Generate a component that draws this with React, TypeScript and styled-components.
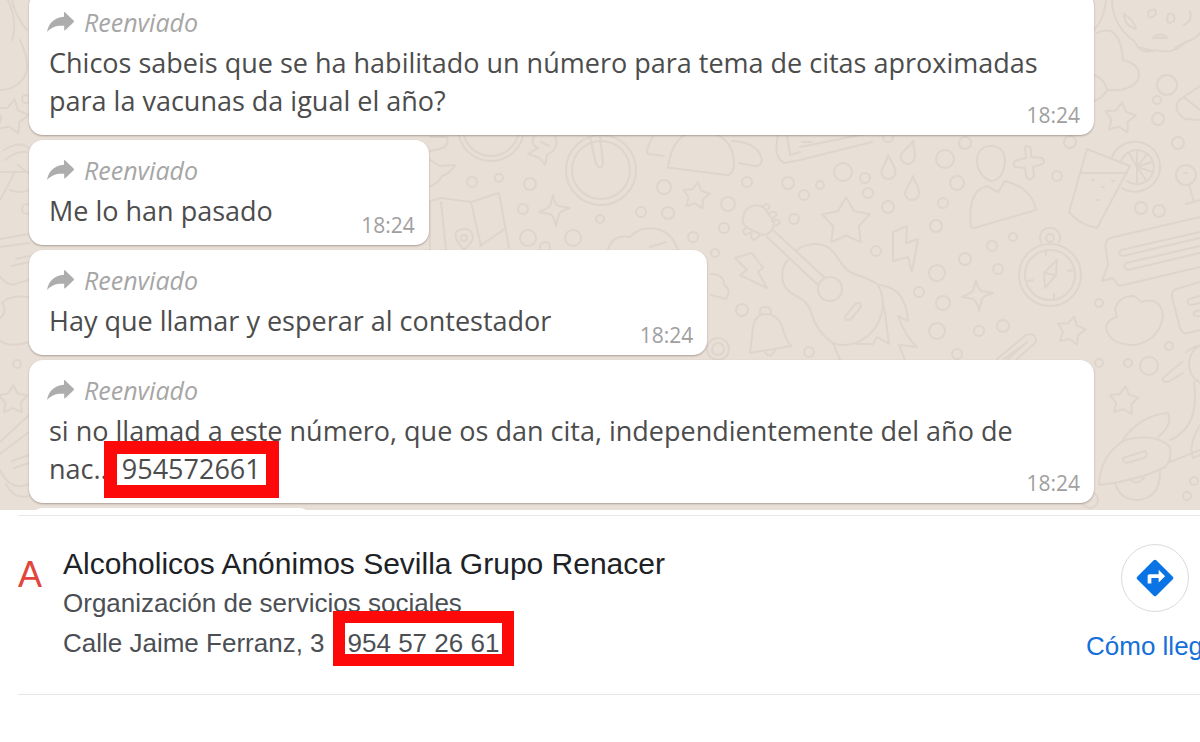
import React from "react";
import styled, { createGlobalStyle } from "styled-components";

const GlobalStyle = createGlobalStyle`
  *, *::before, *::after { box-sizing: border-box; }
  body { margin: 0; background: #fff; }
`;

const Page = styled.main`
  width: 100%;
  overflow: hidden;
`;

const Chat = styled.section`
  position: relative;
  overflow: hidden;
  background: #e8dfd7;
  font-family: "Open Sans", "Noto Sans", sans-serif;
`;

const WallpaperSvg = styled.svg`
  position: absolute;
  inset: 0;
  width: 100%;
  height: 100%;
  fill: none;
  stroke: #dfd5cc;
  stroke-width: 2;
  stroke-linejoin: round;
  stroke-linecap: round;
`;

const MessageList = styled.ul`
  position: relative;
  display: flex;
  flex-direction: column;
  align-items: flex-start;
  gap: 5px;
  margin: -8px 106px 0 29px;
  padding: 0;
  list-style: none;
`;

const Bubble = styled.li`
  max-width: 100%;
  padding: 14px 14px 15px 20px;
  border-radius: 14px;
  background: #fff;
  box-shadow: 0 1px 2px rgba(80, 60, 50, 0.4);
`;

const NextBubble = styled.li`
  width: 284px;
  height: 2px;
  overflow: hidden;

  &::before {
    content: "";
    display: block;
    height: 40px;
    border-radius: 14px;
    background: #fff;
  }
`;

const Forwarded = styled.div`
  display: flex;
  align-items: center;
  gap: 10px;
  height: 32px;
  margin: 0 0 6px -2px;
  color: #a6a6a6;
  font-size: 25px;
  font-style: italic;
  line-height: 32px;
`;

const ForwardIcon = styled.svg`
  width: 27px;
  height: 20px;
  fill: #adadad;
`;

const MessageBody = styled.div`
  display: grid;

  & > * {
    grid-area: 1 / 1;
  }
`;

const MessageText = styled.p`
  margin: 0;
  color: #4c4c4c;
  font-size: 27px;
  line-height: 38px;
`;

const TimeSpace = styled.span`
  display: inline-block;
  width: 142px;
`;

const Time = styled.time`
  place-self: end;
  margin-bottom: -10px;
  color: #a0a0a0;
  font-size: 21px;
  line-height: 30px;
`;

const Highlight = styled.mark<{ $inset: string; $gap?: number; $thick: number }>`
  position: relative;
  display: inline-block;
  margin-left: ${(p) => p.$gap ?? 0}px;
  background: none;
  color: inherit;

  &::after {
    content: "";
    position: absolute;
    inset: ${(p) => p.$inset};
    border: ${(p) => p.$thick}px solid #fd0909;
  }
`;

const Results = styled.section`
  padding: 5px 0 47px 18px;
  font-family: "Liberation Sans", Arial, sans-serif;
`;

const Listing = styled.article`
  display: flex;
  align-items: flex-start;
  padding: 29px 0 28px;
  border-top: 1px solid #e6e7e9;
  border-bottom: 1px solid #e6e7e9;
`;

const Marker = styled.span`
  flex: none;
  width: 45px;
  margin-top: 10px;
  color: #e2453c;
  font-size: 36px;
  line-height: 40px;
`;

const Details = styled.div`
  flex: 1;
  min-width: 0;
`;

const Name = styled.h2`
  margin: 0;
  color: #1d2226;
  font-size: 30px;
  font-weight: 400;
  line-height: 38px;
`;

const Line = styled.p`
  margin: 0;
  color: #4b4f54;
  font-size: 26px;
  line-height: 40px;
`;

const Directions = styled.a`
  display: flex;
  flex: none;
  flex-direction: column;
  align-items: center;
  gap: 14px;
  width: 138px;
  margin: -1px -24px 0 0;
  color: #1470d8;
  font-size: 26px;
  line-height: 40px;
  text-decoration: none;
`;

const RoundIcon = styled.span`
  display: grid;
  place-items: center;
  width: 68px;
  height: 68px;
  border: 1px solid #d9dbde;
  border-radius: 50%;

  svg {
    width: 44px;
    height: 44px;
    fill: #0b74e5;
  }
`;

const DirectionsLabel = styled.span`
  align-self: flex-start;
  white-space: nowrap;
`;

const circles: [number, number, number][] = [
  [472, 182, 5], [499, 178, 4], [530, 184, 6], [523, 209, 5], [528, 238, 8], [573, 238, 8],
  [600, 219, 4], [641, 212, 5], [668, 213, 6], [664, 187, 7], [728, 204, 7], [747, 182, 5],
  [788, 183, 6], [724, 228, 5], [693, 237, 5], [794, 219, 5], [715, 253, 4], [742, 310, 6],
  [809, 352, 5], [545, 247, 5], [718, 349, 11], [718, 349, 6],
  [843, 172, 9], [865, 178, 5], [820, 185, 4], [868, 193, 5], [804, 195, 5], [888, 207, 6],
  [945, 159, 9], [957, 183, 7], [943, 203, 5], [936, 226, 6], [1057, 176, 5], [965, 143, 6],
  [1070, 142, 6], [1178, 143, 6], [1013, 237, 4], [992, 246, 5], [965, 259, 6], [998, 269, 5],
  [937, 273, 8], [876, 251, 5], [919, 292, 5], [943, 303, 7], [937, 331, 8], [979, 331, 5],
  [1003, 326, 6], [957, 354, 5], [1099, 303, 4], [1169, 346, 4], [1141, 208, 6], [1159, 211, 6],
  [1149, 366, 9], [1128, 363, 4], [1099, 363, 4], [1194, 481, 4], [1187, 496, 4], [1090, 500, 8],
  [1167, 85, 10], [1157, 100, 4], [1158, 119, 6], [888, 137, 5],
  [26, 99, 4], [27, 209, 5], [17, 364, 4],
];

const stars: [number, number, number, number][] = [
  [846, 222, 25, 0], [696, 196, 14, 8], [1071, 331, 15, 12], [1124, 401, 15, 5],
  [1120, 118, 16, 8], [11, 117, 18, 12], [13, 400, 15, 0],
];

const sparkles: [number, number][] = [[554, 210], [977, 295]];

const drops: [number, number, number][] = [[888, 167, -4], [909, 152, 16], [912, 188, 0]];

const outlines = [
  // drum and pocket watch beside the second message
  "M458 128a33 33 0 0 0 66 0M463 128a28 28 0 0 0 56 0",
  "M590 137 596 164Q601 172 603 163L600 137",
  "M534 136Q530 145 538 148L528 154 540 158 545 165 547 155Q560 148 555 136M541 142l8 4",
  "M430 137 447 137Q450 146 440 149L430 151M430 160 440 166 455 165Q452 172 442 176 438 184 430 186",
  // umbrella
  "M668 168Q672 132 700 130 735 134 734 166 732 176 726 175L672 168ZM653 137Q645 150 648 154L664 156M732 141Q758 142 762 160 761 167 754 166L739 163",
  // folded map
  "M430 201 441 198 471 202 499 193 509 248M430 201V250M441 202 446 250M471 202 481 246M480 246 506 228",
  "M464 250Q450 234 459 230 472 226 473 238 472 243 464 250Z",
  // cloud above the third message
  "M608 250Q612 234 630 237 640 226 658 229 673 234 678 250M650 247l16-5",
  "M711 274Q724 274 724 285 732 290 726 299L711 295",
  // guitar
  "M788 260C780 268 780 285 790 292C800 300 806 298 811 312C815 326 822 336 833 343C846 348 865 344 877 325C884 312 885 298 878 285C870 278 858 276 850 272C840 265 838 255 829 248C818 241 805 244 797 250",
  "M773 230 825 278M767 237 818 285M743 218C745 204 760 202 766 210L774 222C774 230 769 235 762 235L748 228Q742 225 743 218Z",
  "M762 207q5-6 8 0l-3 4M768 214q7-5 9 1l-5 4M772 221q7-3 8 2l-5 3M746 228q-6 3 0 7l5-3M752 233q-3 6 3 7l4-4",
  "M845 317 855 304Q861 301 861 307L851 319Q845 322 845 317Z",
  "M880 285Q906 288 908 321L898 316Q905 336 917 347L899 345M884 306 889 344 877 337 873 344H857M833 343l7 17M899 345l6 15",
  // bolts
  "M893 232 907 226 906 243 918 239 912 272 908 257 893 261Z",
  "M735 258 752 253 763 268 758 272 767 288 740 275 747 270Z",
  // bell
  "M750 353Q752 338 753 327 756 313 766 314 780 315 783 330 786 340 791 346ZM760 313Q759 307 765 307 771 307 771 313M765 352q5 8 10-2",
  // trombone
  "M800 147 870 133M802 142 812 142M800 160 872 142M778 135q-5 22 6 28l16-3M787 135l3 20 10-3",
  // person
  "M991 146C1000 146 1005 152 1005 162 1004 174 998 181 991 181 982 178 977 169 977 161 977 151 983 146 991 146Z",
  "M971 227Q967 191 987 186L998 192 1005 181Q1032 188 1036 210L974 228Z",
  // pinwheel
  "M1025 147Q1031 144 1031 151L1031 157 1042 158Q1047 163 1040 165L1033 167 1034 176Q1030 183 1026 176L1025 168 1015 167Q1011 162 1018 160L1026 158Z",
  // glass with a slice of orange
  "M1087 149 1130 166 1097 228Q1080 225 1069 212ZM1081 173H1127M1112 157A25 25 0 1 1 1122 188",
  "M1121 161A17 17 0 1 1 1127 181M1137 167V151M1137 167 1147 154M1137 167 1152 162M1137 167 1153 172M1137 167 1146 180M1137 167 1137 183M1137 167 1129 153",
  "M1092 180h2M1102 187h2M1112 181h2M1097 200h2",
  "M1176 175a10 10 0 1 0 20 0 10 10 0 1 0-20 0M1184 173h3M1189 185 1194 202M1186 204 1200 200",
  // compass
  "M1041 242a10 10 0 1 1 18 0M1046 238a4 4 0 1 0 8 0 4 4 0 1 0-8 0M1057 260 1056 275 1045 288 1044 273ZM1044 273l12 2M1046 250v5M1073 270l-5 1M1028 281l5-1M1054 299v-5",
  // speech bubble
  "M1200 217 1110 238Q1104 241 1106 250L1108 265 1102 281 1113 278 1119 286 1200 267",
  "M1200 232 1121 250Q1117 255 1123 256L1200 238M1200 246 1126 263Q1122 268 1128 270L1200 253",
  "M1115 310Q1118 296 1134 296L1142 302Q1160 296 1163 315 1160 340 1135 345 1108 345 1106 327 1108 319 1117 317Z",
  "M1200 282 1176 289Q1171 291 1172 297L1180 328Q1182 334 1188 333L1200 330M1200 296l-11 3q-4 5 2 6l9-2M1200 310l-6 2q-2 5 6 4",
  // paper clip
  "M997 359 1026 335Q1036 332 1036 342L1017 359M1004 359 1023 345 1027 342 1008 359",
  // aeroplane
  "M1099 485Q1100 455 1125 440 1155 432 1170 447 1172 460 1165 467 1140 480 1099 485ZM1122 441Q1140 415 1168 413 1173 425 1158 437",
  "M1115 483Q1120 500 1138 500 1160 498 1160 472M1130 478q5 9 14 0M1123 458 1145 451Q1149 455 1144 458L1127 463Q1122 462 1123 458Z",
  "M1200 345a22 22 0 0 0 0 38M1194 382Q1200 428 1170 440M1170 462 1200 450M1182 362 1163 378Q1162 384 1170 381L1183 373M1186 352 1196 346M1200 425Q1188 445 1193 458L1200 455",
  // biscuit
  "M1112 0Q1112 25 1135 42 1140 55 1155 50 1175 55 1185 42 1195 40 1200 33M1138 47l16 4M1175 48l12-6",
  "M1124 14q0 12 12 15-2-9-12-15M1148 12q8-6 8 2-8 8-8-2M1168 14q8-2 6 7-9 6-6-7M1153 38h14q-6-7-14 0M1184 25q9-4 6-14",
  "M1097 33Q1120 22 1123 60 1143 65 1138 80 1130 92 1108 90M1094 75Q1104 78 1107 90 1103 98 1094 101M1094 30q10-10 12-30",
  "M1200 86 1179 100Q1172 110 1185 119L1200 120M1185 98 1200 110",
  // left edge
  "M8 0Q18 22 12 40M12 0Q16 18 27 30M20 40Q33 68 22 80 14 90 0 90M4 150Q20 140 29 148M0 172H29M5 160Q17 150 27 152M10 190Q20 194 29 190M15 172 0 200M18 165l10 8",
  "M0 239 29 234M0 247 29 243M12 266 29 262M16 259 29 256M0 277Q10 288 18 283L29 280",
  "M2 303Q8 295 29 297M2 303Q8 312 0 318M0 341Q12 348 29 342M0 442 29 415M12 461 29 455M14 468 29 463M0 470Q10 492 29 484M0 454 29 432M6 484Q14 500 29 496",
];

function starPath(cx: number, cy: number, r: number, turn: number) {
  const points = Array.from({ length: 10 }, (_, i) => {
    const angle = ((i * 36 - 90 + turn) * Math.PI) / 180;
    const length = i % 2 ? r * 0.54 : r;
    return `${(cx + length * Math.cos(angle)).toFixed(1)} ${(cy + length * Math.sin(angle)).toFixed(1)}`;
  });
  return `M${points.join("L")}Z`;
}

function Wallpaper() {
  return (
    <WallpaperSvg viewBox="0 0 1200 510" preserveAspectRatio="xMinYMin slice" aria-hidden="true">
      {circles.map(([cx, cy, r], i) => (
        <circle key={i} cx={cx} cy={cy} r={r} />
      ))}
      <circle cx="601" cy="170" r="35" />
      <circle cx="601" cy="170" r="29" />
      <circle cx="830" cy="289" r="12" />
      <circle cx="1050" cy="275" r="31" />
      <circle cx="1050" cy="275" r="25" />
      <circle cx="464" cy="238" r="3" />
      {stars.map(([cx, cy, r, turn], i) => (
        <path key={i} d={starPath(cx, cy, r, turn)} />
      ))}
      {sparkles.map(([x, y], i) => (
        <path
          key={i}
          transform={`translate(${x} ${y})`}
          d="M-1-15Q1-4 5-4L16-2Q6 1 5 4L2 16Q0 6-4 4L-15 2Q-6-2-4-4Z"
        />
      ))}
      {drops.map(([x, y, turn], i) => (
        <path
          key={i}
          transform={`translate(${x} ${y}) rotate(${turn})`}
          d="M1-12C3-4 8 0 7 6 5 14-5 14-7 6-7 0-1-4 1-12Z"
        />
      ))}
      {outlines.map((d, i) => (
        <path key={i} d={d} />
      ))}
    </WallpaperSvg>
  );
}

function Message({ children }: { children: React.ReactNode }) {
  return (
    <Bubble>
      <Forwarded>
        <ForwardIcon viewBox="0 0 27 20" aria-hidden="true">
          <path d="M17 0.5Q17.4-.3 18.2.4L26.6 8.6Q27.3 9.4 26.6 10.2L18.2 18.2Q17.2 19 17.2 17.6V13.8C10 13.2 4.5 15 0 20 1.5 11.5 7 5.5 17 4.8Z" />
        </ForwardIcon>
        Reenviado
      </Forwarded>
      <MessageBody>
        <MessageText>
          {children}
          <TimeSpace />
        </MessageText>
        <Time>18:24</Time>
      </MessageBody>
    </Bubble>
  );
}

export default function App() {
  return (
    <Page>
      <GlobalStyle />
      <Chat>
        <Wallpaper />
        <MessageList>
          <Message>
            Chicos sabeis que se ha habilitado un número para tema de citas aproximadas para la
            vacunas da igual el año?
          </Message>
          <Message>Me lo han pasado</Message>
          <Message>Hay que llamar y esperar al contestador</Message>
          <Message>
            si no llamad a este número, que os dan cita, independientemente del año de nac...{" "}
            <Highlight $inset="-9px -18px -10px -18px" $thick={13}>
              954572661
            </Highlight>
          </Message>
          <NextBubble aria-hidden="true" />
        </MessageList>
      </Chat>
      <Results>
        <Listing>
          <Marker>A</Marker>
          <Details>
            <Name>Alcoholicos Anónimos Sevilla Grupo Renacer</Name>
            <Line>Organización de servicios sociales</Line>
            <Line>
              Calle Jaime Ferranz, 3
              <Highlight $inset="-12px -15px -3px" $gap={23} $thick={12}>
                954 57 26 61
              </Highlight>
            </Line>
          </Details>
          <Directions href="#como-llegar">
            <RoundIcon>
              <svg viewBox="0 0 24 24" aria-hidden="true">
                <path d="M21.71 11.29l-9-9c-.39-.39-1.02-.39-1.41 0l-9 9c-.39.39-.39 1.02 0 1.41l9 9c.39.39 1.02.39 1.41 0l9-9c.39-.38.39-1.01 0-1.41zM14 14.5V12h-4v3H8v-4c0-.55.45-1 1-1h5V7.5l3.5 3.5-3.5 3.5z" />
              </svg>
            </RoundIcon>
            <DirectionsLabel>Cómo lleg</DirectionsLabel>
          </Directions>
        </Listing>
      </Results>
    </Page>
  );
}
